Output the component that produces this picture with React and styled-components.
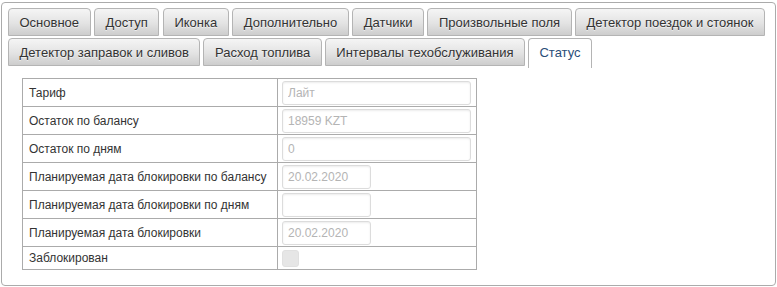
import React from "react";
import styled, { createGlobalStyle } from "styled-components";

const Global = createGlobalStyle`
  html, body {
    margin: 0;
    padding: 0;
    background: #fff;
    font-family: "Liberation Sans", Arial, sans-serif;
  }
`;

const Panel = styled.div`
  box-sizing: border-box;
  margin: 2px 0 0 1px;
  width: 775px;
  height: 284px;
  border: 1px solid #ababab;
  border-radius: 4px;
  padding: 5px 6px 0;
`;

const TabRow = styled.div`
  display: flex;
  gap: ${p => (p.wide ? "3.5px" : "3px")};
  margin-bottom: 2px;
`;

const Tab = styled.div`
  box-sizing: border-box;
  height: ${p => (p.active ? "30px" : "28px")};
  margin-bottom: ${p => (p.active ? "-2px" : "0")};
  padding: 0 10.5px;
  display: flex;
  align-items: center;
  font-size: 13px;
  color: ${p => (p.active ? "#2a4d78" : "#333")};
  text-shadow: ${p => (p.active ? "none" : "0 1px 0 rgba(255,255,255,0.6)")};
  white-space: nowrap;
  border: 1px solid #b4b4b4;
  border-bottom: ${p => (p.active ? "none" : "1px solid #b4b4b4")};
  border-radius: 4px 4px 0 0;
  background: ${p =>
    p.active ? "#fff" : "linear-gradient(to bottom, #f5f5f5 0%, #e3e3e3 55%, #cdcdcd 100%)"};
  padding-bottom: ${p => (p.active ? "2px" : "0")};
`;

const Content = styled.div`
  padding: 10px 0 0 14px;
`;

const Table = styled.table`
  border-collapse: collapse;
  font-size: 12px;
  color: #333;
`;

const Row = styled.tr`
  height: ${p => (p.short ? "23px" : "28px")};
`;

const Label = styled.td`
  box-sizing: border-box;
  width: 255px;
  border: 1px solid #ababab;
  padding: 0 0 0 6px;
`;

const Value = styled.td`
  box-sizing: border-box;
  width: 199px;
  border: 1px solid #ababab;
  padding: 0 0 0 4px;
`;

const Input = styled.input`
  box-sizing: border-box;
  display: block;
  width: ${p => (p.narrow ? "89px" : "189px")};
  height: 24px;
  margin: 1px 0 0;
  padding: 0 5px;
  border: 1px solid #dcdcdc;
  border-radius: 3px;
  box-shadow: inset 0 1px 2px rgba(0, 0, 0, 0.08);
  background: #fff;
  font-family: "Liberation Sans", Arial, sans-serif;
  font-size: 12px;
  color: #b4b4b4;
  -webkit-text-fill-color: #b4b4b4;
  opacity: 1;
`;

const Check = styled.span`
  display: block;
  width: 17px;
  height: 17px;
  border-radius: 3px;
  background: #e6e6e6;
  border: 1px solid #e0e0e0;
  box-sizing: border-box;
`;

const row1 = [
  "Основное",
  "Доступ",
  "Иконка",
  "Дополнительно",
  "Датчики",
  "Произвольные поля",
  "Детектор поездок и стоянок",
];
const row2 = [
  "Детектор заправок и сливов",
  "Расход топлива",
  "Интервалы техобслуживания",
  "Статус",
];

const fields = [
  { label: "Тариф", value: "Лайт" },
  { label: "Остаток по балансу", value: "18959 KZT" },
  { label: "Остаток по дням", value: "0" },
  { label: "Планируемая дата блокировки по балансу", value: "20.02.2020", narrow: true },
  { label: "Планируемая дата блокировки по дням", value: "", narrow: true },
  { label: "Планируемая дата блокировки", value: "20.02.2020", narrow: true },
];

export default function App() {
  return (
    <>
      <Global />
      <Panel>
        <TabRow wide>
          {row1.map(t => (
            <Tab key={t}>{t}</Tab>
          ))}
        </TabRow>
        <TabRow>
          {row2.map(t => (
            <Tab key={t} active={t === "Статус"}>
              {t}
            </Tab>
          ))}
        </TabRow>
        <Content>
          <Table>
            <tbody>
              {fields.map(f => (
                <Row key={f.label}>
                  <Label>{f.label}</Label>
                  <Value>
                    <Input narrow={f.narrow} value={f.value} disabled readOnly />
                  </Value>
                </Row>
              ))}
              <Row short>
                <Label>Заблокирован</Label>
                <Value>
                  <Check />
                </Value>
              </Row>
            </tbody>
          </Table>
        </Content>
      </Panel>
    </>
  );
}
